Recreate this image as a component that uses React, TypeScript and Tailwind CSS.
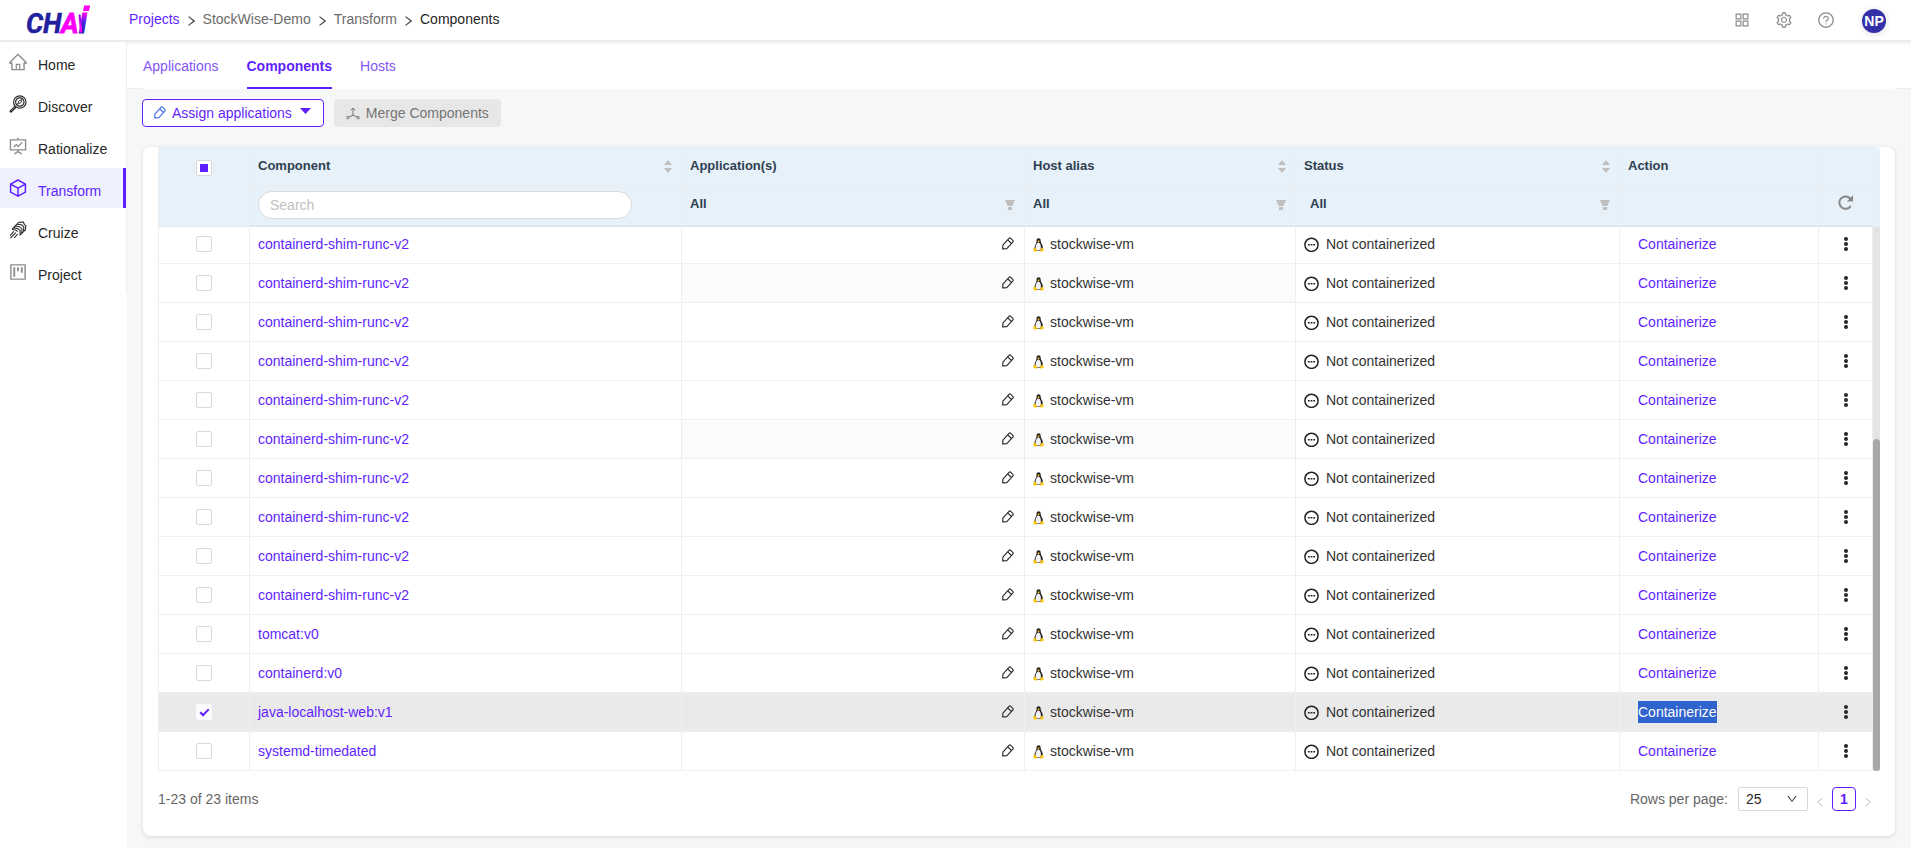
import { useEffect, useRef } from 'react'
import {
  AiOutlineAppstore,
  AiOutlineDown,
  AiOutlineFundProjectionScreen,
  AiOutlineHome,
  AiOutlineLeft,
  AiOutlineProject,
  AiOutlineQuestionCircle,
  AiOutlineRight,
  AiOutlineSetting,
} from 'react-icons/ai'

interface ComponentRow {
  id: number
  name: string
  selected?: boolean
  shaded?: boolean
}

const rows: ComponentRow[] = [
  { id: 10, name: 'containerd-shim-runc-v2' },
  { id: 11, name: 'containerd-shim-runc-v2', shaded: true },
  { id: 12, name: 'containerd-shim-runc-v2' },
  { id: 13, name: 'containerd-shim-runc-v2' },
  { id: 14, name: 'containerd-shim-runc-v2' },
  { id: 15, name: 'containerd-shim-runc-v2', shaded: true },
  { id: 16, name: 'containerd-shim-runc-v2' },
  { id: 17, name: 'containerd-shim-runc-v2' },
  { id: 18, name: 'containerd-shim-runc-v2' },
  { id: 19, name: 'containerd-shim-runc-v2' },
  { id: 20, name: 'tomcat:v0' },
  { id: 21, name: 'containerd:v0' },
  { id: 22, name: 'java-localhost-web:v1', selected: true },
  { id: 23, name: 'systemd-timedated' },
]

function Logo() {
  return (
    <svg width="76" height="40" viewBox="0 0 76 40" role="img" aria-label="CHAI">
      <defs>
        <linearGradient id="logo-a" gradientUnits="userSpaceOnUse" x1="40" y1="30" x2="58" y2="16">
          <stop offset="0" stopColor="#ff00f5" />
          <stop offset="0.6" stopColor="#f800f8" />
          <stop offset="1" stopColor="#4a18d8" />
        </linearGradient>
        <linearGradient id="logo-i" gradientUnits="userSpaceOnUse" x1="56" y1="33" x2="62" y2="12">
          <stop offset="0" stopColor="#1c1ca8" />
          <stop offset="0.5" stopColor="#4a20e8" />
          <stop offset="0.9" stopColor="#ff00f5" />
        </linearGradient>
      </defs>
      <text y="33" fontSize="27" fontStyle="italic" fontWeight="700" fontFamily="Roboto, sans-serif">
        <tspan x="0" fill="#21219d" stroke="#21219d" strokeWidth="0.500">C</tspan>
        <tspan x="17" fill="#21219d" stroke="#21219d" strokeWidth="0.500">H</tspan>
        <tspan x="35" fill="#fb00f6" stroke="#fb00f6" strokeWidth="0.800">A</tspan>
        <tspan x="53" fill="url(#logo-i)" stroke="url(#logo-i)" strokeWidth="1.200">I</tspan>
      </text>
      <path d="M52.500 14.500h2l2 18h-2.500z" fill="url(#logo-a)" />
      <path d="M58.200 5.500h6l-1.200 5.500h-6z" fill="#ff00f5" />
    </svg>
  )
}

function DiscoverIcon() {
  return (
    <svg width="18" height="18" viewBox="0 0 18 18" fill="none" stroke="#2b2b2b" strokeWidth="1.2">
      <circle cx="10.8" cy="7" r="6.2" />
      <circle cx="10.8" cy="7" r="4.200" />
      <path d="M8.600 9.200l1.200-3.200 3.200-1.400-1.200 3.200z" strokeWidth="0.900" />
      <path d="M6 11.2l-5 5 .9 1 5.2-5" strokeLinejoin="round" />
    </svg>
  )
}

function CubeIcon() {
  return (
    <svg width="18" height="18" viewBox="0 0 18 18" fill="none" stroke="#5f1fff" strokeWidth="1.5" strokeLinejoin="round">
      <path d="M9 1l7.4 4.1v8L9 17.2l-7.4-4.1v-8z" />
      <path d="M1.6 5.1L9 9.2l7.4-4.1M9 9.2v8" />
    </svg>
  )
}

function CruizeIcon() {
  return (
    <svg width="18" height="18" viewBox="0 0 18 18" fill="none" stroke="#2b2b2b" strokeWidth="1.100" strokeLinejoin="round">
      <path d="M9.800 1.400l4.600-.4 1 2.600 1.400 1-.4 4.400-2 1.600" />
      <path d="M9.800 1.400L8 3.200l4.400.6 2.400 1.800-.2 5" />
      <path d="M8 3.200L6.200 5l4.400.8 2.400 2-.2 4.600 1.800-1.800" />
      <path d="M6.200 5L4.400 6.800l4.400.8 2.400 2-.2 4.600 1.800-1.800" />
      <path d="M4.400 6.800l-1.200 1.400 3.800 1 1.600 1.400" />
      <path d="M4.800 10.400L1 14.600M6.800 11.600l-5.400 5.600M8.600 13.200L5.200 17" />
    </svg>
  )
}

function PencilIcon({ className }: { className: string }) {
  return (
    <svg width="12" height="13" viewBox="0 0 12 13" fill="none" stroke="currentColor" strokeWidth="1.100" strokeLinejoin="round" className={className}>
      <path d="M.700 11.900l.2-3.800L7 1.400q.9-.9 1.800 0l2 1.900q.9.900 0 1.800L4.800 11.600z" />
      <path d="M5.700 2.900l3.800 3.600" />
    </svg>
  )
}

function MergeIcon() {
  return (
    <svg width="14" height="13" viewBox="0 0 14 13" fill="none" stroke="currentColor" strokeWidth="1">
      <path d="M7 1.2v7M4.8 3.2L7 1l2.2 2.2M7 8.2l-4.400 2M7 8.2l4.400 2" />
      <circle cx="1.8" cy="10.6" r="1.2" />
      <circle cx="12.2" cy="10.6" r="1.2" />
    </svg>
  )
}

function PenguinIcon() {
  return (
    <svg width="11" height="14" viewBox="0 0 11 14" className="mt-px">
      <path d="M5.600.2c1.500 0 2.100 1 2.100 2.600 0 1.500.5 2.200 1.300 3.600.8 1.500 1 3 .7 4.800l-1.300 1.600H3L1.600 10.800C1.300 9.300 1.800 8 2.400 6.800 3 5.400 3.500 4.600 3.500 2.900 3.500 1.200 4.100.2 5.600.2z" fill="#222" />
      <path d="M5.400 4.400c.8 0 1.500.7 2 2.200.6 1.700.7 3.400.1 5.600H3.300c-.8-1.800-.9-3.400-.4-4.600.6-1.500 1.400-3.200 2.500-3.200z" fill="#f4f4f4" />
      <path d="M4.300 3.200l1.200-.9 1.300.8-1.300 1.300z" fill="#f5bd0c" />
      <path d="M.2 13l.3-2.700 1.400-.9 2.500 3-1 1.400zM10.800 12.800l-.4-2.200-1.300-1.100-1.900 2.200.2 2.100z" fill="#f8c510" />
    </svg>
  )
}

function StatusIcon() {
  return (
    <svg width="15" height="16" viewBox="0 0 15 16" fill="none" stroke="#222" strokeWidth="1.500">
      <circle cx="7.500" cy="8.800" r="6.600" />
      <path d="M3.900 8.800h1.800M6.600 8.800h1.800M9.300 8.800h1.800" strokeWidth="1.400" />
    </svg>
  )
}

function SortIcon() {
  return (
    <svg width="8" height="13" viewBox="0 0 8 13" fill="#bfbfbf">
      <path d="M4 0l4 5H0zM4 13L0 8h8z" />
    </svg>
  )
}

function FunnelIcon() {
  return (
    <svg width="10" height="10" viewBox="0 0 10 10" fill="#bfbfbf">
      <path d="M0 0h10L7.300 6H2.700zM2.900 7h4.200v3H2.900z" />
    </svg>
  )
}

function RefreshIcon() {
  return (
    <svg width="15" height="15" viewBox="0 0 15 15" fill="none" stroke="#888" strokeWidth="2">
      <path d="M12.800 11A6.200 6.200 0 1 1 12.200 3.500" />
      <path d="M15 .200v6.200H8.800z" fill="#888" stroke="none" />
    </svg>
  )
}

const navItems = [
  { label: 'Home', icon: <AiOutlineHome size={20} /> },
  { label: 'Discover', icon: <DiscoverIcon /> },
  { label: 'Rationalize', icon: <AiOutlineFundProjectionScreen size={20} /> },
  { label: 'Transform', icon: <CubeIcon />, active: true },
  { label: 'Cruize', icon: <CruizeIcon /> },
  { label: 'Project', icon: <AiOutlineProject size={20} /> },
]

function Header() {
  const crumbs = ['Projects', 'StockWise-Demo', 'Transform', 'Components']
  return (
    <header className="flex h-[42px] items-center border-b-2 border-[#ebebeb] bg-white">
      <a href="#home" className="flex w-[129px] items-center pl-[26px]">
        <Logo />
      </a>
      <nav aria-label="Breadcrumb" className="pb-0.5">
        <ol className="flex items-center gap-2">
          {crumbs.map((crumb, i) => (
            <li key={crumb} className="flex items-center gap-2">
              {i > 0 && (
                <svg width="7" height="10" viewBox="0 0 7 10" fill="none" stroke="#444" strokeWidth="1.200" className="mt-1">
                  <path d="M.5.6L6.200 5 .5 9.400" />
                </svg>
              )}
              <a
                href={`#${crumb}`}
                className={i === 0 ? 'text-[#5f1fff]' : i === crumbs.length - 1 ? 'text-[#262626]' : 'text-[#6b6b6b]'}
              >
                {crumb}
              </a>
            </li>
          ))}
        </ol>
      </nav>
      <div className="ml-auto flex items-center pr-[25px] text-[#8c8c8c]">
        <button type="button" aria-label="Apps" className="mr-6"><AiOutlineAppstore size={18} /></button>
        <button type="button" aria-label="Settings" className="mr-6"><AiOutlineSetting size={18} /></button>
        <button type="button" aria-label="Help" className="mr-[27px]"><AiOutlineQuestionCircle size={18} /></button>
        <button type="button" className="mt-0.5 size-6 rounded-full bg-[#3330a8] text-center font-bold leading-6 text-white shadow-[0_1px_4px_2px_rgba(0,0,0,0.08)]">
          NP
        </button>
      </div>
    </header>
  )
}

function Sidebar() {
  return (
    <aside className="w-[127px] shrink-0 bg-white">
      <nav className="border-r border-[#efefef]">
        <ul>
          {navItems.map((item) => (
            <li key={item.label} className="pb-0.5">
              <a
                href={`#${item.label}`}
                className={`flex h-10 items-center gap-2.5 pl-2 ${
                  item.active ? 'border-r-3 border-[#5f1fff] bg-[#f0f1ff] text-[#5f1fff]' : 'text-[#262626]'
                }`}
              >
                <span className={`flex w-5 justify-center ${item.active ? '' : 'text-[#8c8c8c]'}`}>{item.icon}</span>
                <span className="pt-1.5">{item.label}</span>
              </a>
            </li>
          ))}
        </ul>
      </nav>
    </aside>
  )
}

function Tabs() {
  return (
    <div className="border-b border-t-2 border-t-[#f6f6f6] border-b-[#ebedef] bg-white px-4">
      <nav className="-mb-px flex h-[45px] gap-7 bg-white">
        <a href="#applications" className="flex items-center pb-0.5 text-[#8555f5]">Applications</a>
        <a href="#components" aria-current="page" className="flex items-center border-b-2 border-[#5f1fff] font-bold text-[#5f1fff]">
          Components
        </a>
        <a href="#hosts" className="flex items-center pb-0.5 text-[#8555f5]">Hosts</a>
      </nav>
    </div>
  )
}

function Toolbar() {
  return (
    <div className="flex gap-2.5 pb-5 pl-[15px] pt-2.5">
      <button type="button" className="flex h-7 items-center rounded border border-[#5f1fff] bg-white pl-[11px] pr-3 text-[#5f1fff]">
        <PencilIcon className="mb-0.5 mr-1.5 text-[#3d6bef]" />
        Assign applications
        <svg width="11" height="6" viewBox="0 0 11 6" fill="currentColor" className="mb-1 ml-2">
          <path d="M0 0h11L5.500 6z" />
        </svg>
      </button>
      <button type="button" disabled className="flex h-7 items-center gap-1.5 rounded bg-[#e7e7e7] px-3 text-[#757575]">
        <MergeIcon />
        Merge Components
      </button>
    </div>
  )
}

const checkboxClass =
  'relative block size-4 appearance-none rounded-xs border border-[#d9d9d9] bg-white before:absolute ' +
  'indeterminate:before:left-[3px] indeterminate:before:top-[3px] indeterminate:before:size-2 indeterminate:before:bg-[#5f1fff] ' +
  'checked:border-[#fafaff] checked:bg-[#fafaff] checked:before:left-[5px] checked:before:top-[2px] checked:before:h-[9px] checked:before:w-[5px] ' +
  'checked:before:rotate-45 checked:before:border-b-2 checked:before:border-r-2 checked:before:border-[#5f1fff]'

function Columns() {
  return (
    <colgroup>
      <col className="w-[92px]" />
      <col className="w-[432px]" />
      <col className="w-[343px]" />
      <col className="w-[271px]" />
      <col className="w-[324px]" />
      <col className="w-[199px]" />
      <col className="w-[54px]" />
    </colgroup>
  )
}

function FilterButton({ label }: { label: string }) {
  return (
    <button type="button" aria-label={`${label}: All`} className="flex w-full items-center justify-between pr-px font-bold">
      All
      <FunnelIcon />
    </button>
  )
}

const headTop = 'h-[39px] border-b border-r border-[#eceff2] px-2 text-left'
const headBottom = 'h-[41px] border-b-2 border-r border-b-[#e2e6ec] border-r-[#eceff2] px-2 pb-0.5 text-left'

function TableHead() {
  const allRef = useRef<HTMLInputElement>(null)

  useEffect(() => {
    if (allRef.current) allRef.current.indeterminate = true
  }, [])

  return (
    <div className="rounded-tr bg-[#e6f1fa] pr-[7px]">
      <table className="w-full table-fixed border-separate border-spacing-0 text-[13px] text-[#2f3f50]">
        <Columns />
        <thead>
          <tr>
            <th rowSpan={2} className="border-b border-l border-r border-[#eceff2] p-0 pt-[13px] align-top">
              <input ref={allRef} type="checkbox" aria-label="Select all" className={`mx-auto ${checkboxClass}`} />
            </th>
            <th className={headTop}>
              <span className="flex items-center justify-between pr-px">Component<SortIcon /></span>
            </th>
            <th className={headTop}>Application(s)</th>
            <th className={headTop}>
              <span className="flex items-center justify-between pr-px">Host alias<SortIcon /></span>
            </th>
            <th className={headTop}>
              <span className="flex items-center justify-between pr-px">Status<SortIcon /></span>
            </th>
            <th className={headTop}>Action</th>
            <th className={headTop} aria-label="More" />
          </tr>
          <tr>
            <th className={headBottom}>
              <input
                type="text"
                placeholder="Search"
                aria-label="Search component"
                className="block h-7 w-[90%] rounded-full border border-[#d9d9d9] bg-white px-[11px] text-sm font-normal placeholder:text-[#bfbfbf]"
              />
            </th>
            <th className={headBottom}><FilterButton label="Applications" /></th>
            <th className={headBottom}><FilterButton label="Host alias" /></th>
            <th className={headBottom}>
              <div className="pl-1.5"><FilterButton label="Status" /></div>
            </th>
            <th className={headBottom} />
            <th className={headBottom}>
              <button type="button" aria-label="Refresh" className="mx-auto block pb-1"><RefreshIcon /></button>
            </th>
          </tr>
        </thead>
      </table>
    </div>
  )
}

const cell = 'h-[39px] border-b border-r border-[#efefef] px-2'

function TableRow({ row }: { row: ComponentRow }) {
  const shade = row.shaded ? 'bg-[#fafbfd]' : ''
  return (
    <tr className={row.selected ? 'bg-[#eaeaea]' : 'bg-white'}>
      <td className={`border-l ${cell}`}>
        <input
          type="checkbox"
          defaultChecked={row.selected}
          aria-label={`Select ${row.name}`}
          className={`mx-auto ${checkboxClass}`}
        />
      </td>
      <td className={cell}>
        <a href={`#component-${row.id}`} className="text-[#5f1fff]">{row.name}</a>
      </td>
      <td className={`${cell} ${shade}`}>
        <button type="button" aria-label="Edit applications" className="ml-auto mr-0.5 block pb-0.5">
          <PencilIcon className="text-[#262626]" />
        </button>
      </td>
      <td className={`${cell} ${shade}`}>
        <span className="flex items-center gap-1.5 text-[#333]">
          <PenguinIcon />
          stockwise-vm
        </span>
      </td>
      <td className={cell}>
        <span className="flex items-center gap-[7px] text-[#333]">
          <StatusIcon />
          Not containerized
        </span>
      </td>
      <td className={`${cell} pl-[18px]`}>
        <button type="button" className={row.selected ? 'bg-[#2f63ce] leading-[22px] text-white' : 'leading-[22px] text-[#5f1fff]'}>
          Containerize
        </button>
      </td>
      <td className={cell}>
        <button type="button" aria-label="More actions" className="mx-auto block">
          <svg width="4" height="14" viewBox="0 0 4 14" fill="#262626">
            <circle cx="2" cy="2" r="2" />
            <circle cx="2" cy="7" r="2" />
            <circle cx="2" cy="12" r="2" />
          </svg>
        </button>
      </td>
    </tr>
  )
}

function Pagination() {
  return (
    <div className="flex items-center justify-between pb-[25px] pt-4 text-[#666]">
      <p>1-23 of 23 items</p>
      <div className="flex items-center gap-1.5 pr-1.5">
        <label htmlFor="page-size">Rows per page:</label>
        <div className="relative ml-1">
          <select id="page-size" defaultValue="25" className="block h-6 w-[70px] appearance-none rounded-xs border border-[#d9d9d9] bg-white pl-[7px] text-[#262626]">
            <option>10</option>
            <option>25</option>
            <option>50</option>
          </select>
          <AiOutlineDown size={12} className="pointer-events-none absolute right-[10px] top-1.5 text-[#333]" />
        </div>
        <button type="button" disabled aria-label="Previous page" className="pt-1.5 text-[#ccc]"><AiOutlineLeft size={12} /></button>
        <button type="button" className="size-6 rounded border border-[#5f1fff] font-bold text-[#5f1fff]">1</button>
        <button type="button" disabled aria-label="Next page" className="pt-1.5 text-[#ccc]"><AiOutlineRight size={12} /></button>
      </div>
    </div>
  )
}

function ComponentsCard() {
  return (
    <section className="mx-4 mb-3 rounded-lg bg-white px-[15px] shadow-[0_1px_4px_rgba(0,0,0,0.12)]">
      <TableHead />
      <div className="flex overflow-hidden">
        <div className="min-w-0 flex-1">
          {/* the list is scrolled to its end, so the first row sits partly under the header */}
          <table className="-mt-0.5 w-full table-fixed border-separate border-spacing-0">
            <Columns />
            <tbody>
              {rows.map((row) => <TableRow key={row.id} row={row} />)}
            </tbody>
          </table>
        </div>
        <div className="flex w-[7px] shrink-0 flex-col justify-end bg-[#e4e4e4]">
          <div className="h-[61%] rounded-full bg-[#a8a8a8]" />
        </div>
      </div>
      <Pagination />
    </section>
  )
}

export default function App() {
  return (
    <div className="flex min-h-screen flex-col bg-[#f5f7f9] font-['Liberation_Sans',Arial,sans-serif] text-sm">
      <Header />
      <div className="flex grow">
        <Sidebar />
        <main className="min-w-0 grow">
          <Tabs />
          <Toolbar />
          <ComponentsCard />
        </main>
      </div>
    </div>
  )
}
